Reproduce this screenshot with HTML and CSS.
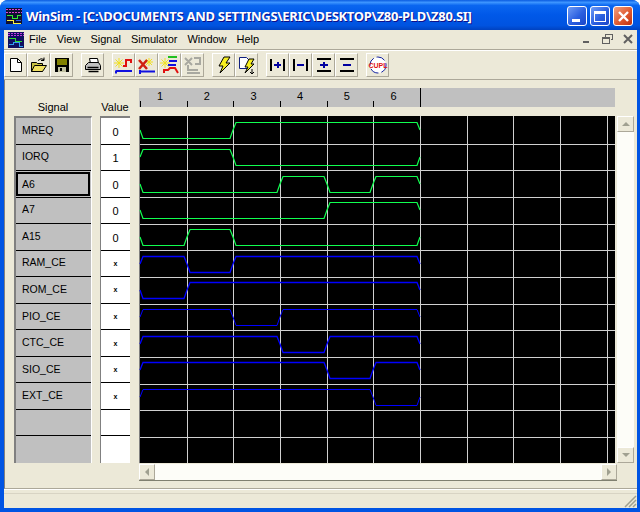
FILE: index.html
```html
<!DOCTYPE html>
<html lang="en">
<head>
    <meta charset="UTF-8">
    <title>WinSim</title>
    <link rel="stylesheet" href="styles.css">
</head>
<body>
<div class="window">
    <!-- Title bar -->
    <div class="titlebar">
        <svg class="app-icon" width="16" height="16" viewBox="0 0 16 16" shape-rendering="crispEdges">
            <rect width="16" height="16" fill="#101030"/>
            <path d="M0 1h16M0 4h16" stroke="#e040d0" stroke-dasharray="2 1"/>
            <path d="M1 7h5v3h5v-3h4" stroke="#30f030" fill="none"/>
            <path d="M1 12h6v3h8" stroke="#f8f040" fill="none"/>
            <path d="M10 12h5" stroke="#3060f0"/>
        </svg>
        <span class="title-text">WinSim - [C:\DOCUMENTS AND SETTINGS\ERIC\DESKTOP\Z80-PLD\Z80.SI]</span>
        <div class="caption-btns">
            <div class="caption-btn"><span class="glyph-min"></span></div>
            <div class="caption-btn"><span class="glyph-max"></span></div>
            <div class="caption-btn close">
                <svg width="13" height="13" viewBox="0 0 13 13"><path d="M2 2l9 9M11 2l-9 9" stroke="#fff" stroke-width="2.4"/></svg>
            </div>
        </div>
    </div>

    <div class="client">
        <!-- Menu -->
        <div class="menubar">
            <svg class="menu-icon" width="16" height="16" viewBox="0 0 16 16" shape-rendering="crispEdges">
                <rect width="16" height="16" fill="#101060"/>
                <path d="M0 1h16M0 3h16" stroke="#c040e0" stroke-dasharray="2 1"/>
                <path d="M1 6h6v3h7" stroke="#30e030" fill="none"/>
                <path d="M1 12h4v-2h6v4h4" stroke="#30a0f0" fill="none"/>
            </svg>
            <span class="menu-item">File</span>
            <span class="menu-item">View</span>
            <span class="menu-item">Signal</span>
            <span class="menu-item">Simulator</span>
            <span class="menu-item">Window</span>
            <span class="menu-item">Help</span>
            <div class="mdi-btns">
                <svg width="14" height="12" viewBox="0 0 14 12" shape-rendering="crispEdges"><rect x="3" y="8" width="6" height="2" fill="#606060"/></svg>
                <svg width="14" height="12" viewBox="0 0 14 12" shape-rendering="crispEdges"><path d="M4.5 3.5v-2h7v5h-2M1.5 4.5h7v6h-7zM1.5 5.5h7" fill="none" stroke="#606060"/></svg>
                <svg width="14" height="12" viewBox="0 0 14 12"><path d="M2 2l8 8M10 2l-8 8" stroke="#606060" stroke-width="2"/></svg>
            </div>
        </div>

        <!-- Toolbar -->
        <div class="toolbar">
            <div class="tool-group">
                <div class="tool">
                    <svg width="16" height="16" viewBox="0 0 16 16"><path d="M2.5 1.5h7l4 4v9h-11z" fill="#fff" stroke="#000"/><path d="M9.5 1.5v4h4" fill="none" stroke="#000"/></svg>
                </div>
                <div class="tool">
                    <svg width="18" height="16" viewBox="0 0 18 16"><path d="M1.5 5.5h5l1 1h5v8h-11z" fill="#c8c040" stroke="#000"/><path d="M1.5 14.5l3-6h12l-4 6z" fill="#f0e060" stroke="#000"/><path d="M8 3.5q3-3 6-1M14 .5v3h-3" fill="none" stroke="#000"/></svg>
                </div>
                <div class="tool">
                    <svg width="16" height="16" viewBox="0 0 16 16" shape-rendering="crispEdges"><rect x="1" y="1" width="14" height="14" fill="#000"/><rect x="3" y="2" width="10" height="6" fill="#808000"/><rect x="4" y="10" width="8" height="5" fill="#c0c0a0"/><rect x="6" y="11" width="2" height="3" fill="#000"/></svg>
                </div>
            </div>
            <div class="tool-group">
                <div class="tool">
                    <svg width="18" height="16" viewBox="0 0 18 16"><path d="M5.5 1.5h8l1 5h-8z" fill="#fff" stroke="#000"/><path d="M1.5 8.5l3-3h10l2 3v4h-15z" fill="#c0c0c0" stroke="#000"/><path d="M3.5 10.5h11M4.500 14.500h10" stroke="#000" stroke-width="1.500"/></svg>
                </div>
            </div>
            <div class="tool-group">
                <div class="tool">
                    <svg width="20" height="20" viewBox="0 0 20 20"><path d="M5 3v10M0 8h10M1.500 4.500l7 7M8.500 4.500l-7 7" stroke="#f0e020"/><path d="M9 11h3V5h5v3" fill="none" stroke="#e01010" stroke-width="2"/><path d="M2 15.500v3M2 16h16" fill="none" stroke="#1010e0" stroke-width="2"/></svg>
                </div>
                <div class="tool">
                    <svg width="20" height="20" viewBox="0 0 20 20"><path d="M12 3v8M8 7h8M9 4l6 6M15 4l-6 6" stroke="#f0e020"/><path d="M2 5l8 9M10 5l-8 9" stroke="#d02010" stroke-width="2.500"/><path d="M3 15v4M3 16.500h15" fill="none" stroke="#1010e0" stroke-width="2"/></svg>
                </div>
                <div class="tool">
                    <svg width="20" height="20" viewBox="0 0 20 20"><path d="M5 3v10M0 8h10M1.500 4.500l7 7M8.500 4.500l-7 7" stroke="#f0e020"/><path d="M8 2h9" stroke="#20c020" stroke-width="2"/><path d="M9 6h8M8 10h8" stroke="#1010e0" stroke-width="2"/><path d="M4 18v-3h4l2-2h5l3 5" fill="none" stroke="#e01010" stroke-width="2"/></svg>
                </div>
                <div class="tool">
                    <svg width="20" height="20" viewBox="0 0 20 20"><path d="M2 3l7 7M9 3l-7 7M11 3h6v6h-5M5 10v5h10M4 18h13" fill="none" stroke="#a8a8a0" stroke-width="2"/></svg>
                </div>
            </div>
            <div class="tool-group">
                <div class="tool">
                    <svg width="20" height="20" viewBox="0 0 20 20"><path d="M10 2h6l-4 6h4L6 18l3-7H5z" fill="#f8f020" stroke="#000"/></svg>
                </div>
                <div class="tool">
                    <svg width="20" height="20" viewBox="0 0 20 20"><path d="M2.500 2.500h7l3 3v8h-10z" fill="#fff" stroke="#102080"/><path d="M12 4h5l-3 5h3L8 18l3-6H8z" fill="#f8f020" stroke="#000"/><path d="M15 14v5M13 17l2 2 2-2" fill="none" stroke="#000"/></svg>
                </div>
            </div>
            <div class="tool-group">
                <div class="tool">
                    <svg width="18" height="16" viewBox="0 0 18 16" shape-rendering="crispEdges"><path d="M2 2v12M15 2v12" stroke="#000" stroke-width="2"/><path d="M5 8h7M8.500 5v6" stroke="#0000a0" stroke-width="2"/></svg>
                </div>
                <div class="tool">
                    <svg width="18" height="16" viewBox="0 0 18 16" shape-rendering="crispEdges"><path d="M2 2v12M15 2v12" stroke="#000" stroke-width="2"/><path d="M5 8h7" stroke="#0000a0" stroke-width="2"/></svg>
                </div>
                <div class="tool">
                    <svg width="16" height="16" viewBox="0 0 16 16" shape-rendering="crispEdges"><path d="M1 2h14M1 14h14" stroke="#000" stroke-width="2"/><path d="M4 8h8M8 5v6" stroke="#0000a0" stroke-width="2"/></svg>
                </div>
                <div class="tool">
                    <svg width="16" height="16" viewBox="0 0 16 16" shape-rendering="crispEdges"><path d="M1 2h14M1 14h14" stroke="#000" stroke-width="2"/><path d="M4 8h8" stroke="#0000a0" stroke-width="2"/></svg>
                </div>
            </div>
            <div class="tool-group">
                <div class="tool">
                    <svg width="20" height="20" viewBox="0 0 20 20"><circle cx="10" cy="10" r="8" fill="#fff" stroke="#1020a0" stroke-dasharray="9 3"/><text class="cupl-text" x="10" y="12.500" text-anchor="middle">CUPL</text></svg>
                </div>
            </div>
        </div>

        <!-- Signal table and waveform -->
        <div class="workspace">
            <div class="col-head">Signal</div>
            <div class="col-head">Value</div>
            <div class="ruler">
                <div class="tick">1</div>
                <div class="tick">2</div>
                <div class="tick">3</div>
                <div class="tick">4</div>
                <div class="tick">5</div>
                <div class="tick">6</div>
                <div class="tick end"></div>
            </div>
            <div></div>

            <div class="signals">
                <div class="signal">MREQ</div>
                <div class="signal">IORQ</div>
                <div class="signal selected"><span>A6</span></div>
                <div class="signal">A7</div>
                <div class="signal">A15</div>
                <div class="signal">RAM_CE</div>
                <div class="signal">ROM_CE</div>
                <div class="signal">PIO_CE</div>
                <div class="signal">CTC_CE</div>
                <div class="signal">SIO_CE</div>
                <div class="signal">EXT_CE</div>
                <div class="signal"></div>
                <div class="signal"></div>
            </div>
            <div class="values">
                <div class="value">0</div>
                <div class="value">1</div>
                <div class="value">0</div>
                <div class="value">0</div>
                <div class="value">0</div>
                <div class="value small">x</div>
                <div class="value small">x</div>
                <div class="value small">x</div>
                <div class="value small">x</div>
                <div class="value small">x</div>
                <div class="value small">x</div>
                <div class="value"></div>
                <div class="value"></div>
            </div>
            <svg class="plot" width="476" height="347" viewBox="139 116 476 347">
                <rect x="139" y="116" width="476" height="347" fill="#000"/>
                <path class="edge" d="M139.500 116V463"/>
                <path class="grid" d="M187.500 116V463M233.500 116V463M280.500 116V463M327.500 116V463M373.500 116V463M420.500 116V463M467.500 116V463M513.500 116V463M560.500 116V463M607.500 116V463
                    M140 144.500H615M140 170.500H615M140 197.500H615M140 224.500H615M140 250.500H615M140 277.500H615M140 304.500H615M140 330.500H615M140 357.500H615M140 384.500H615M140 410.500H615M140 437.500H615"/>
                <g class="wave green">
                    <polyline points="140,130 143,138.500 230,138.500 233,130 236,122.500 417,122.500 420,130"/>
                    <polyline points="140,157 143,149.500 230,149.500 233,157 236,165.500 417,165.500 420,157"/>
                    <polyline points="140,184 143,192.500 277,192.500 280,184 283,176.500 324,176.500 327,184 330,192.500 370,192.500 373,184 376,176.500 417,176.500 420,184"/>
                    <polyline points="140,210 143,218.500 324,218.500 327,210 330,202.500 417,202.500 420,210"/>
                    <polyline points="140,237 143,245.500 184,245.500 187,237 190,229.500 230,229.500 233,237 236,245.500 417,245.500 420,237"/>
                </g>
                <g class="wave blue">
                    <polyline points="140,264 143,256.500 184,256.500 187,264 190,272.500 230,272.500 233,264 236,256.500 417,256.500 420,264"/>
                    <polyline points="140,290 143,298.500 184,298.500 187,290 190,282.500 417,282.500 420,290"/>
                    <polyline class="thin" points="140,317 143,309.500 230,309.500 233,317 236,325.500 277,325.500 280,317 283,309.500 417,309.500 420,317"/>
                    <polyline points="140,344 143,336.500 277,336.500 280,344 283,352.500 324,352.500 327,344 330,336.500 417,336.500 420,344"/>
                    <polyline points="140,370 143,362.500 324,362.500 327,370 330,378.500 370,378.500 373,370 376,362.500 417,362.500 420,370"/>
                    <polyline class="thin" points="140,397 143,389.500 370,389.500 373,397 376,405.500 417,405.500 420,397"/>
                </g>
            </svg>
            <div class="vscroll">
                <div class="arrow-btn"><span class="arrow up"></span></div>
                <div class="track"></div>
                <div class="arrow-btn"><span class="arrow down"></span></div>
            </div>

            <div class="hscroll">
                <div class="arrow-btn"><span class="arrow left"></span></div>
                <div class="track"></div>
                <div class="arrow-btn"><span class="arrow right"></span></div>
            </div>
        </div>

        <!-- Status bar -->
        <div class="statusbar">
            <svg class="grip" width="14" height="14" viewBox="0 0 14 14"><path d="M13 2L2 13M13 6l-7 7M13 10l-3 3" stroke="#a0a090" stroke-width="1.500"/></svg>
        </div>
    </div>
</div>
</body>
</html>
```

FILE: styles.css
```css
/* Page */
body {
    margin: 0;
    background-color: #fff;
    overflow: hidden;
    font-family: "Liberation Sans", sans-serif;
    font-size: 11px;
    color: #000;
}

.window {
    width: 640px;
    height: 512px;
    display: flex;
    flex-direction: column;
    background-color: #0054e3;
    border-radius: 8px 8px 0 0;
}

/* Title bar */
.titlebar {
    height: 30px;
    display: flex;
    align-items: center;
    padding: 2px 7px 0 6px;
    box-sizing: border-box;
    border-radius: 8px 8px 0 0;
    background: linear-gradient(#0a5be0 0, #3d95ff 8%, #0a66f0 18%, #0058e8 50%, #0053e0 85%, #0042c0 100%);
}

.app-icon {
    flex: none;
}

.title-text {
    margin-left: 4px;
    color: #fff;
    font-family: "Noto Sans", sans-serif;
    font-weight: 700;
    font-size: 13px;
    letter-spacing: -0.3px;
    white-space: nowrap;
    text-shadow: 1px 1px 0 #0f1089;
}

.caption-btns {
    margin-left: auto;
    display: flex;
    gap: 3px;
}

.caption-btn {
    width: 20px;
    height: 20px;
    box-sizing: border-box;
    border: 1px solid #fff;
    border-radius: 3px;
    background: linear-gradient(135deg, #6f9cf5 0, #2a5fe0 55%, #1a45c8 100%);
    display: flex;
    align-items: center;
    justify-content: center;
}

.caption-btn.close {
    background: linear-gradient(135deg, #f0a080 0, #e05a30 55%, #c03010 100%);
}

.glyph-min {
    width: 8px;
    height: 3px;
    margin: 8px 3px 0 0;
    background-color: #fff;
}

.glyph-max {
    width: 12px;
    height: 11px;
    box-sizing: border-box;
    border: 1px solid #fff;
    border-top-width: 3px;
}

/* Inside of the window */
.client {
    flex: 1;
    min-height: 0;
    margin: 0 3px 4px 4px;
    display: flex;
    flex-direction: column;
    background-color: #ece9d8;
}

.menubar {
    height: 21px;
    display: flex;
    align-items: center;
    border-bottom: 1px solid #fff;
    box-shadow: inset 0 -1px 0 #aca899;
    padding: 0 0 3px 4px;
    box-sizing: border-box;
    flex: none;
}

.menu-icon {
    margin: 2px 5px 0 0;
}

.menu-item {
    padding-right: 10px;
}

.mdi-btns {
    margin-left: auto;
    display: flex;
    gap: 7px;
    padding-right: 1px;
}

/* Toolbar */
.toolbar {
    height: 29px;
    flex: none;
    display: flex;
    align-items: center;
    gap: 8px;
    box-sizing: border-box;
    border-bottom: 1px solid #aca899;
}

.tool-group {
    display: flex;
}

.tool {
    width: 23px;
    height: 24px;
    box-sizing: border-box;
    border: 1px solid;
    border-color: #fff #aca899 #aca899 #fff;
    display: flex;
    align-items: center;
    justify-content: center;
}

.cupl-text {
    font-family: "Liberation Sans", sans-serif;
    font-size: 7px;
    font-weight: 700;
    fill: #e01010;
}

/* Signal table and waveform */
.workspace {
    flex: 1;
    min-height: 0;
    display: grid;
    grid-template-columns: 86px 39px 478px 17px;
    grid-template-rows: 28px 347px 17px;
    padding: 8px 0 0 9px;
    box-sizing: border-box;
    border-left: 1px solid #808080;
    border-bottom: 1px solid #aca899;
}

.col-head {
    align-self: end;
    text-align: center;
    padding-bottom: 1px;
    line-height: 15px;
}

.col-head:nth-child(1) {
    width: 78px;
}

.col-head:nth-child(2) {
    width: 30px;
}

.ruler {
    width: 476px;
    height: 19px;
    display: flex;
    padding-left: 1px;
    box-sizing: border-box;
    background-color: #c0c0c0;
}

.tick {
    width: 46.7px;
    flex: none;
    position: relative;
    padding: 1px 0 0 17px;
    box-sizing: border-box;
    line-height: 15px;
}

.tick::before {
    content: "";
    position: absolute;
    left: 0;
    bottom: 0;
    width: 1px;
    height: 6px;
    background-color: #000;
}

.tick.end::before {
    height: 19px;
}

.signals {
    width: 78px;
    display: grid;
    grid-template-rows: repeat(13, 1fr);
    box-sizing: border-box;
    background-color: #c0c0c0;
    border-style: solid;
    border-width: 2px 1px 0 2px;
    border-color: #808080 #fff #fff #808080;
    font-size: 10.5px;
}

.signal {
    box-sizing: border-box;
    display: flex;
    align-items: center;
    padding: 0 0 2px 6px;
    border-bottom: 1px solid #000;
}

.signal:last-child {
    border-bottom: 0;
}

.signal.selected {
    padding: 0 1px 1px 0;
}

.signal.selected span {
    flex: 1;
    align-self: stretch;
    margin-top: 1px;
    display: flex;
    align-items: center;
    padding-left: 4px;
    border: 2px solid #000;
    box-sizing: border-box;
}

.values {
    width: 30px;
    display: grid;
    grid-template-rows: repeat(13, 1fr);
    box-sizing: border-box;
    background-color: #fff;
    border-top: 2px solid #808080;
    border-left: 1px solid #808080;
}

.value {
    box-sizing: border-box;
    display: flex;
    align-items: center;
    justify-content: center;
    padding-top: 2px;
    border-bottom: 1px solid #000;
}

.value:last-child {
    border-bottom: 0;
}

.value.small {
    font-size: 7px;
    font-weight: 700;
    padding-top: 0;
}

.plot {
    display: block;
}

.edge {
    stroke: #808080;
    fill: none;
}

.grid {
    stroke: #d0d0d0;
    fill: none;
}

.wave polyline {
    fill: none;
}

.wave.green {
    stroke: #10ff50;
    stroke-width: 1.2;
}

.wave.blue {
    stroke: #0000ff;
    stroke-width: 1.3;
}

.wave .thin {
    stroke-width: 1;
}

/* Scroll bars */
.vscroll {
    display: flex;
    flex-direction: column;
}

.hscroll {
    grid-column: 3;
    margin-top: 1px;
    display: flex;
    height: 17px;
    box-sizing: border-box;
    border-bottom: 1px solid #808070;
}

.track {
    flex: 1;
    background-color: #fdfdf8;
}

.arrow-btn {
    width: 16px;
    height: 16px;
    flex: none;
    box-sizing: border-box;
    border: 1px solid;
    border-color: #fff #aca899 #aca899 #fff;
    background-color: #ece9d8;
    display: flex;
    align-items: center;
    justify-content: center;
}

.vscroll .arrow-btn {
    width: 17px;
}

.arrow {
    width: 0;
    height: 0;
    border: 4px solid transparent;
}

.arrow.up {
    border-top: 0;
    border-bottom-color: #a0a090;
}

.arrow.down {
    border-bottom: 0;
    border-top-color: #a0a090;
}

.arrow.left {
    border-left: 0;
    border-right-color: #a0a090;
}

.arrow.right {
    border-right: 0;
    border-left-color: #a0a090;
}

/* Status bar */
.statusbar {
    height: 19px;
    flex: none;
    display: flex;
    justify-content: flex-end;
    align-items: flex-end;
    box-sizing: border-box;
    border-top: 1px solid #fff;
    box-shadow: inset 0 3px 0 #ece9d8, inset 0 4px 0 #d8d4c4;
}
```
